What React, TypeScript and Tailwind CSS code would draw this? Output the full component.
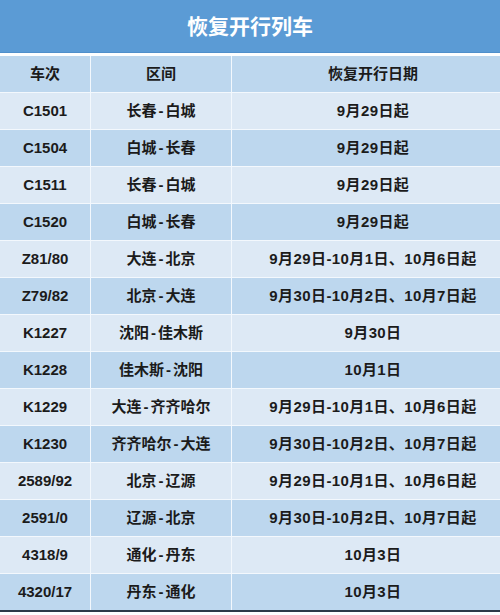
const rows: [string, string, string][] = [
  ["C1501", "长春-白城", "9月29日起"],
  ["C1504", "白城-长春", "9月29日起"],
  ["C1511", "长春-白城", "9月29日起"],
  ["C1520", "白城-长春", "9月29日起"],
  ["Z81/80", "大连-北京", "9月29日-10月1日、10月6日起"],
  ["Z79/82", "北京-大连", "9月30日-10月2日、10月7日起"],
  ["K1227", "沈阳-佳木斯", "9月30日"],
  ["K1228", "佳木斯-沈阳", "10月1日"],
  ["K1229", "大连-齐齐哈尔", "9月29日-10月1日、10月6日起"],
  ["K1230", "齐齐哈尔-大连", "9月30日-10月2日、10月7日起"],
  ["2589/92", "北京-辽源", "9月29日-10月1日、10月6日起"],
  ["2591/0", "辽源-北京", "9月30日-10月2日、10月7日起"],
  ["4318/9", "通化-丹东", "10月3日"],
  ["4320/17", "丹东-通化", "10月3日"],
];

const font = {
  fontFamily: '"Liberation Sans", "Noto Sans CJK SC", sans-serif',
};

// route shows a spaced hyphen in the source table
function Route({ text }: { text: string }) {
  const [a, b] = text.split("-");
  return (
    <span>
      {a}
      <span className="mx-[2px]">-</span>
      {b}
    </span>
  );
}

export default function App() {
  return (
    <div className="h-[615px] w-[500px] overflow-hidden bg-white" style={font}>
      <div className="flex h-[53px] items-center justify-center border-b border-[#4f8fcb] bg-[#5b9bd5] pt-[2px]">
        <h1 className="text-[21px] font-bold text-white">恢复开行列车</h1>
      </div>
      <div className="mt-[3px] grid grid-cols-[90px_140px_1fr] gap-x-px gap-y-px border-b-2 border-[#2e3a48] bg-[#f3f8fd] text-[15px] font-bold text-[#1b1b1b]">
        <div className="flex h-[36px] items-center justify-center bg-[#bdd7ee]">车次</div>
        <div className="flex h-[36px] items-center justify-center bg-[#bdd7ee]">区间</div>
        <div className="flex h-[36px] items-center justify-center bg-[#bdd7ee] pl-[14px]">恢复开行日期</div>
        {rows.map(([train, route, date], i) => {
          const bg = i % 2 === 0 ? "bg-[#dde9f5]" : "bg-[#bdd7ee]";
          return [
            <div key={`${i}a`} className={`flex h-[36px] items-center justify-center ${bg}`}>
              {train}
            </div>,
            <div key={`${i}b`} className={`flex h-[36px] items-center justify-center ${bg}`}>
              <Route text={route} />
            </div>,
            <div key={`${i}c`} className={`flex h-[36px] items-center justify-center pl-[14px] tracking-[0.4px] ${bg}`}>
              {date}
            </div>,
          ];
        })}
      </div>
    </div>
  );
}
